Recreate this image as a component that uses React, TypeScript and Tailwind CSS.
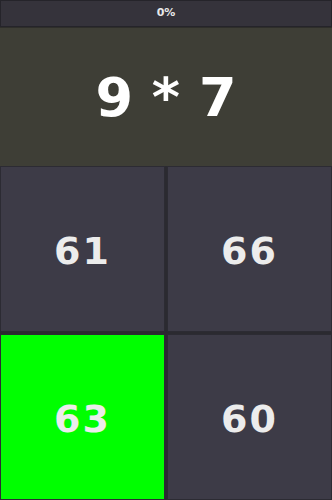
import React from "react";

const font = { fontFamily: '"DejaVu Sans", "Liberation Sans", sans-serif' };

function Cell({ v, green }: { v: string; green?: boolean }) {
  return (
    <div
      className={`flex items-center justify-center border border-[#2c2b33] pt-[4px] ${
        green ? "bg-[#00ff00]" : "bg-[#3d3b47]"
      }`}
    >
      <span className="text-[38px] font-bold tracking-[2px] text-[#ececec]" style={font}>
        {v}
      </span>
    </div>
  );
}

export default function App() {
  return (
    <div className="flex h-[500px] w-[332px] flex-col bg-[#2a2a2e]" style={font}>
      <div className="flex h-[27px] items-center justify-center border border-[#25242a] bg-[#35333b]">
        <span className="text-[11px] font-bold text-[#e8e8e8]">0%</span>
      </div>
      <div className="flex h-[139px] items-center justify-center border-t border-[#2e2e2a] bg-[#3e3e36]">
        <span className="text-[54px] font-bold tracking-[0px] text-white">9 * 7</span>
      </div>
      <div className="grid flex-1 grid-cols-2 grid-rows-2 gap-[2px] bg-[#2b2a30]">
        <Cell v="61" />
        <Cell v="66" />
        <Cell v="63" green />
        <Cell v="60" />
      </div>
    </div>
  );
}
